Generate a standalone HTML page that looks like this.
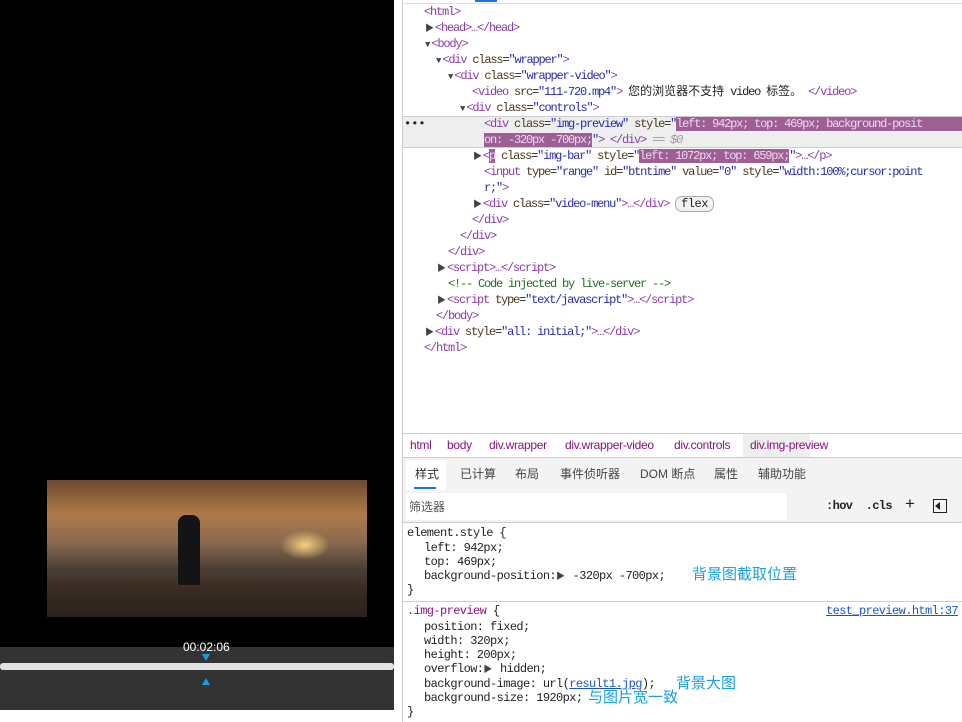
<!DOCTYPE html>
<html><head><meta charset="utf-8"><style>
*{margin:0;padding:0;box-sizing:border-box}
body{width:962px;height:722px;position:relative;background:#fff;overflow:hidden;font-family:"Liberation Mono","Noto Sans CJK SC",monospace;font-size:12px;letter-spacing:-1.2px;color:#222}
.a{position:absolute;white-space:nowrap;line-height:16px}
.s{letter-spacing:-0.6px}
.t{color:#8a3da8}.n{color:#4a3a20}.v{color:#2a2ab0}.c{color:#236e25}
.hl{background:#9e5f97;color:#f0d8ee}
.tri{font-size:9px;color:#444;letter-spacing:0;margin-right:1px}
.ui{font-family:"Liberation Sans","Noto Sans CJK SC",sans-serif;letter-spacing:0}
.blue{color:#1a9fe0;font-family:"Liberation Sans","Noto Sans CJK SC",sans-serif;letter-spacing:0;font-size:15px}
.bc{position:absolute;top:438px;font-family:"Liberation Sans",sans-serif;letter-spacing:-0.3px;font-size:12px;color:#881280}
</style></head><body>
<div style="position:absolute;left:0;top:0;width:394px;height:647px;background:#000"></div>
<div style="position:absolute;left:47px;top:480px;width:320px;height:137px;background:linear-gradient(180deg,#6b4a2e 0%,#b07a48 25%,#8a6a50 45%,#4a4036 65%,#3a2a22 80%,#2a2220 100%)"></div>
<div style="position:absolute;left:280px;top:530px;width:50px;height:30px;background:radial-gradient(#f7d080,transparent 70%)"></div>
<div style="position:absolute;left:178px;top:515px;width:22px;height:70px;background:#141414;border-radius:8px 8px 2px 2px"></div>
<div style="position:absolute;left:0;top:647px;width:394px;height:63px;background:#333"></div>
<div style="position:absolute;left:0;top:663px;width:394px;height:7px;background:#e2e2e2;border-radius:3px"></div>
<div class="ui" style="position:absolute;left:183px;top:640px;color:#fff;font-size:12px">00:02:06</div>
<div style="position:absolute;left:202px;top:654px;width:0;height:0;border-left:4px solid transparent;border-right:4px solid transparent;border-top:7px solid #1a9fe0"></div>
<div style="position:absolute;left:202px;top:678px;width:0;height:0;border-left:4px solid transparent;border-right:4px solid transparent;border-bottom:7px solid #1a9fe0"></div>
<div style="position:absolute;left:402px;top:0;width:1px;height:722px;background:#ccc"></div>
<div style="position:absolute;left:403px;top:3px;width:559px;height:1px;background:#ddd"></div>
<div style="position:absolute;left:475px;top:0;width:22px;height:2px;background:#1a73e8"></div>
<div class="a" style="left:424px;top:4px"><span class="t">&lt;html&gt;</span></div>
<div class="a" style="left:425px;top:20px"><span class="tri">▶</span><span class="t">&lt;head&gt;…&lt;/head&gt;</span></div>
<div class="a" style="left:425px;top:36px"><span class="tri">▼</span><span class="t">&lt;body&gt;</span></div>
<div class="a" style="left:436px;top:52px"><span class="tri">▼</span><span class="t">&lt;div </span><span class="n">class</span>=<span class="v">"wrapper"</span><span class="t">&gt;</span></div>
<div class="a" style="left:448px;top:68px"><span class="tri">▼</span><span class="t">&lt;div </span><span class="n">class</span>=<span class="v">"wrapper-video"</span><span class="t">&gt;</span></div>
<div class="a" style="left:472px;top:84px"><span class="t">&lt;video </span><span class="n">src</span>=<span class="v">"111-720.mp4"</span><span class="t">&gt;</span> <span style="letter-spacing:0">您的浏览器不支持</span> video <span style="letter-spacing:0">标签。</span> <span class="t">&lt;/video&gt;</span></div>
<div class="a" style="left:460px;top:100px"><span class="tri">▼</span><span class="t">&lt;div </span><span class="n">class</span>=<span class="v">"controls"</span><span class="t">&gt;</span></div>
<div style="position:absolute;left:403px;top:116px;width:559px;height:32px;background:#eee;border-top:1px solid #ccc;border-bottom:1px solid #ccc"></div>
<div class="a" style="left:404px;top:116px;letter-spacing:0">•••</div>
<div class="a" style="left:484px;top:116px"><span class="t">&lt;div </span><span class="n">class</span>=<span class="v">"img-preview"</span> <span class="n">style</span>=<span class="v">"</span><span class="hl" style="padding-right:60px">left: 942px; top: 469px; background-posit</span></div>
<div class="a" style="left:484px;top:132px"><span class="hl">on: -320px -700px;</span><span class="v">"</span><span class="t">&gt; &lt;/div&gt;</span> <span style="color:#999;font-style:italic">== $0</span></div>
<div class="a" style="left:473px;top:148px"><span class="tri">▶</span><span class="t">&lt;<span class="hl">p</span> </span><span class="n">class</span>=<span class="v">"img-bar"</span> <span class="n">style</span>=<span class="v">"</span><span class="hl">left: 1072px; top: 659px;</span><span class="v">"</span><span class="t">&gt;…&lt;/p&gt;</span></div>
<div class="a" style="left:484px;top:164px"><span class="t">&lt;input </span><span class="n">type</span>=<span class="v">"range"</span> <span class="n">id</span>=<span class="v">"btntime"</span> <span class="n">value</span>=<span class="v">"0"</span> <span class="n">style</span>=<span class="v">"width:100%;cursor:point</span></div>
<div class="a" style="left:484px;top:180px"><span class="v">r;"</span><span class="t">&gt;</span></div>
<div class="a" style="left:473px;top:196px"><span class="tri">▶</span><span class="t">&lt;div </span><span class="n">class</span>=<span class="v">"video-menu"</span><span class="t">&gt;…&lt;/div&gt;</span> <span style="border:1px solid #aaa;border-radius:7px;background:#f2f2f2;padding:0 5px;line-height:12px;letter-spacing:-0.5px">flex</span></div>
<div class="a" style="left:472px;top:212px"><span class="t">&lt;/div&gt;</span></div>
<div class="a" style="left:460px;top:228px"><span class="t">&lt;/div&gt;</span></div>
<div class="a" style="left:448px;top:244px"><span class="t">&lt;/div&gt;</span></div>
<div class="a" style="left:437px;top:260px"><span class="tri">▶</span><span class="t">&lt;script&gt;…&lt;/script&gt;</span></div>
<div class="a" style="left:448px;top:276px"><span class="c">&lt;!-- Code injected by live-server --&gt;</span></div>
<div class="a" style="left:437px;top:292px"><span class="tri">▶</span><span class="t">&lt;script </span><span class="n">type</span>=<span class="v">"text/javascript"</span><span class="t">&gt;…&lt;/script&gt;</span></div>
<div class="a" style="left:436px;top:308px"><span class="t">&lt;/body&gt;</span></div>
<div class="a" style="left:425px;top:324px"><span class="tri">▶</span><span class="t">&lt;div </span><span class="n">style</span>=<span class="v">"all: initial;"</span><span class="t">&gt;…&lt;/div&gt;</span></div>
<div class="a" style="left:424px;top:340px"><span class="t">&lt;/html&gt;</span></div>
<div style="position:absolute;left:403px;top:433px;width:559px;height:1px;background:#ccc"></div>
<div style="position:absolute;left:743px;top:434px;width:67px;height:23px;background:#eee"></div>
<div class="bc" style="left:410px">html</div>
<div class="bc" style="left:447px">body</div>
<div class="bc" style="left:489px">div.wrapper</div>
<div class="bc" style="left:565px">div.wrapper-video</div>
<div class="bc" style="left:674px">div.controls</div>
<div class="bc" style="left:750px">div.img-preview</div>
<div style="position:absolute;left:403px;top:457px;width:559px;height:1px;background:#ccc"></div>
<div style="position:absolute;left:403px;top:458px;width:559px;height:34px;background:#f3f3f3"></div>
<div style="position:absolute;left:406px;top:460px;width:40px;height:30px;background:#fff"></div>
<div style="position:absolute;left:414px;top:487px;width:22px;height:2px;background:#1a73e8"></div>
<div class="a ui" style="left:415px;top:466px;font-size:12px;color:#333">样式</div>
<div class="a ui" style="left:460px;top:466px;font-size:12px;color:#444">已计算</div>
<div class="a ui" style="left:515px;top:466px;font-size:12px;color:#444">布局</div>
<div class="a ui" style="left:560px;top:466px;font-size:12px;color:#444">事件侦听器</div>
<div class="a ui" style="left:640px;top:466px;font-size:12px;color:#444">DOM 断点</div>
<div class="a ui" style="left:714px;top:466px;font-size:12px;color:#444">属性</div>
<div class="a ui" style="left:758px;top:466px;font-size:12px;color:#444">辅助功能</div>
<div style="position:absolute;left:403px;top:492px;width:559px;height:30px;background:#f3f3f3"></div>
<div style="position:absolute;left:406px;top:493px;width:381px;height:27px;background:#fff"></div>
<div class="a ui" style="left:409px;top:499px;font-size:12px;color:#555">筛选器</div>
<div class="a" style="left:826px;top:498px;font-size:12px;letter-spacing:-0.6px;color:#222;font-weight:bold">:hov&nbsp;&nbsp;.cls</div>
<div class="a ui" style="left:905px;top:496px;font-size:17px;color:#222">+</div>
<div style="position:absolute;left:933px;top:499px;width:14px;height:14px;border:1.5px solid #222"></div>
<div style="position:absolute;left:935px;top:502px;width:0;height:0;border-top:4px solid transparent;border-bottom:4px solid transparent;border-right:5px solid #222"></div>
<div style="position:absolute;left:403px;top:522px;width:559px;height:1px;background:#ccc"></div>
<div class="a s" style="left:407px;top:525px">element.style {</div>
<div class="a s" style="left:424px;top:540px">left: 942px;</div>
<div class="a s" style="left:424px;top:554px">top: 469px;</div>
<div class="a s" style="left:424px;top:568px">background-position:<span class="tri">▶</span> -320px -700px;</div>
<div class="a s" style="left:407px;top:582px">}</div>
<div class="a blue" style="left:692px;top:567px">背景图截取位置</div>
<div style="position:absolute;left:403px;top:601px;width:559px;height:1px;background:#ccc"></div>
<div class="a s" style="left:407px;top:603px"><span style="color:#881280">.img-preview</span> {</div>
<div class="a s" style="left:826px;top:603px;color:#1a55c8;text-decoration:underline">test_preview.html:37</div>
<div class="a s" style="left:424px;top:619px">position: fixed;</div>
<div class="a s" style="left:424px;top:633px">width: 320px;</div>
<div class="a s" style="left:424px;top:647px">height: 200px;</div>
<div class="a s" style="left:424px;top:661px">overflow:<span class="tri">▶</span> hidden;</div>
<div class="a s" style="left:424px;top:676px">background-image: url(<span style="color:#1a55c8;text-decoration:underline">result1.jpg</span>);</div>
<div class="a s" style="left:424px;top:690px">background-size: 1920px;</div>
<div class="a s" style="left:407px;top:704px">}</div>
<div class="a blue" style="left:676px;top:676px">背景大图</div>
<div class="a blue" style="left:588px;top:690px">与图片宽一致</div>
</body></html>
